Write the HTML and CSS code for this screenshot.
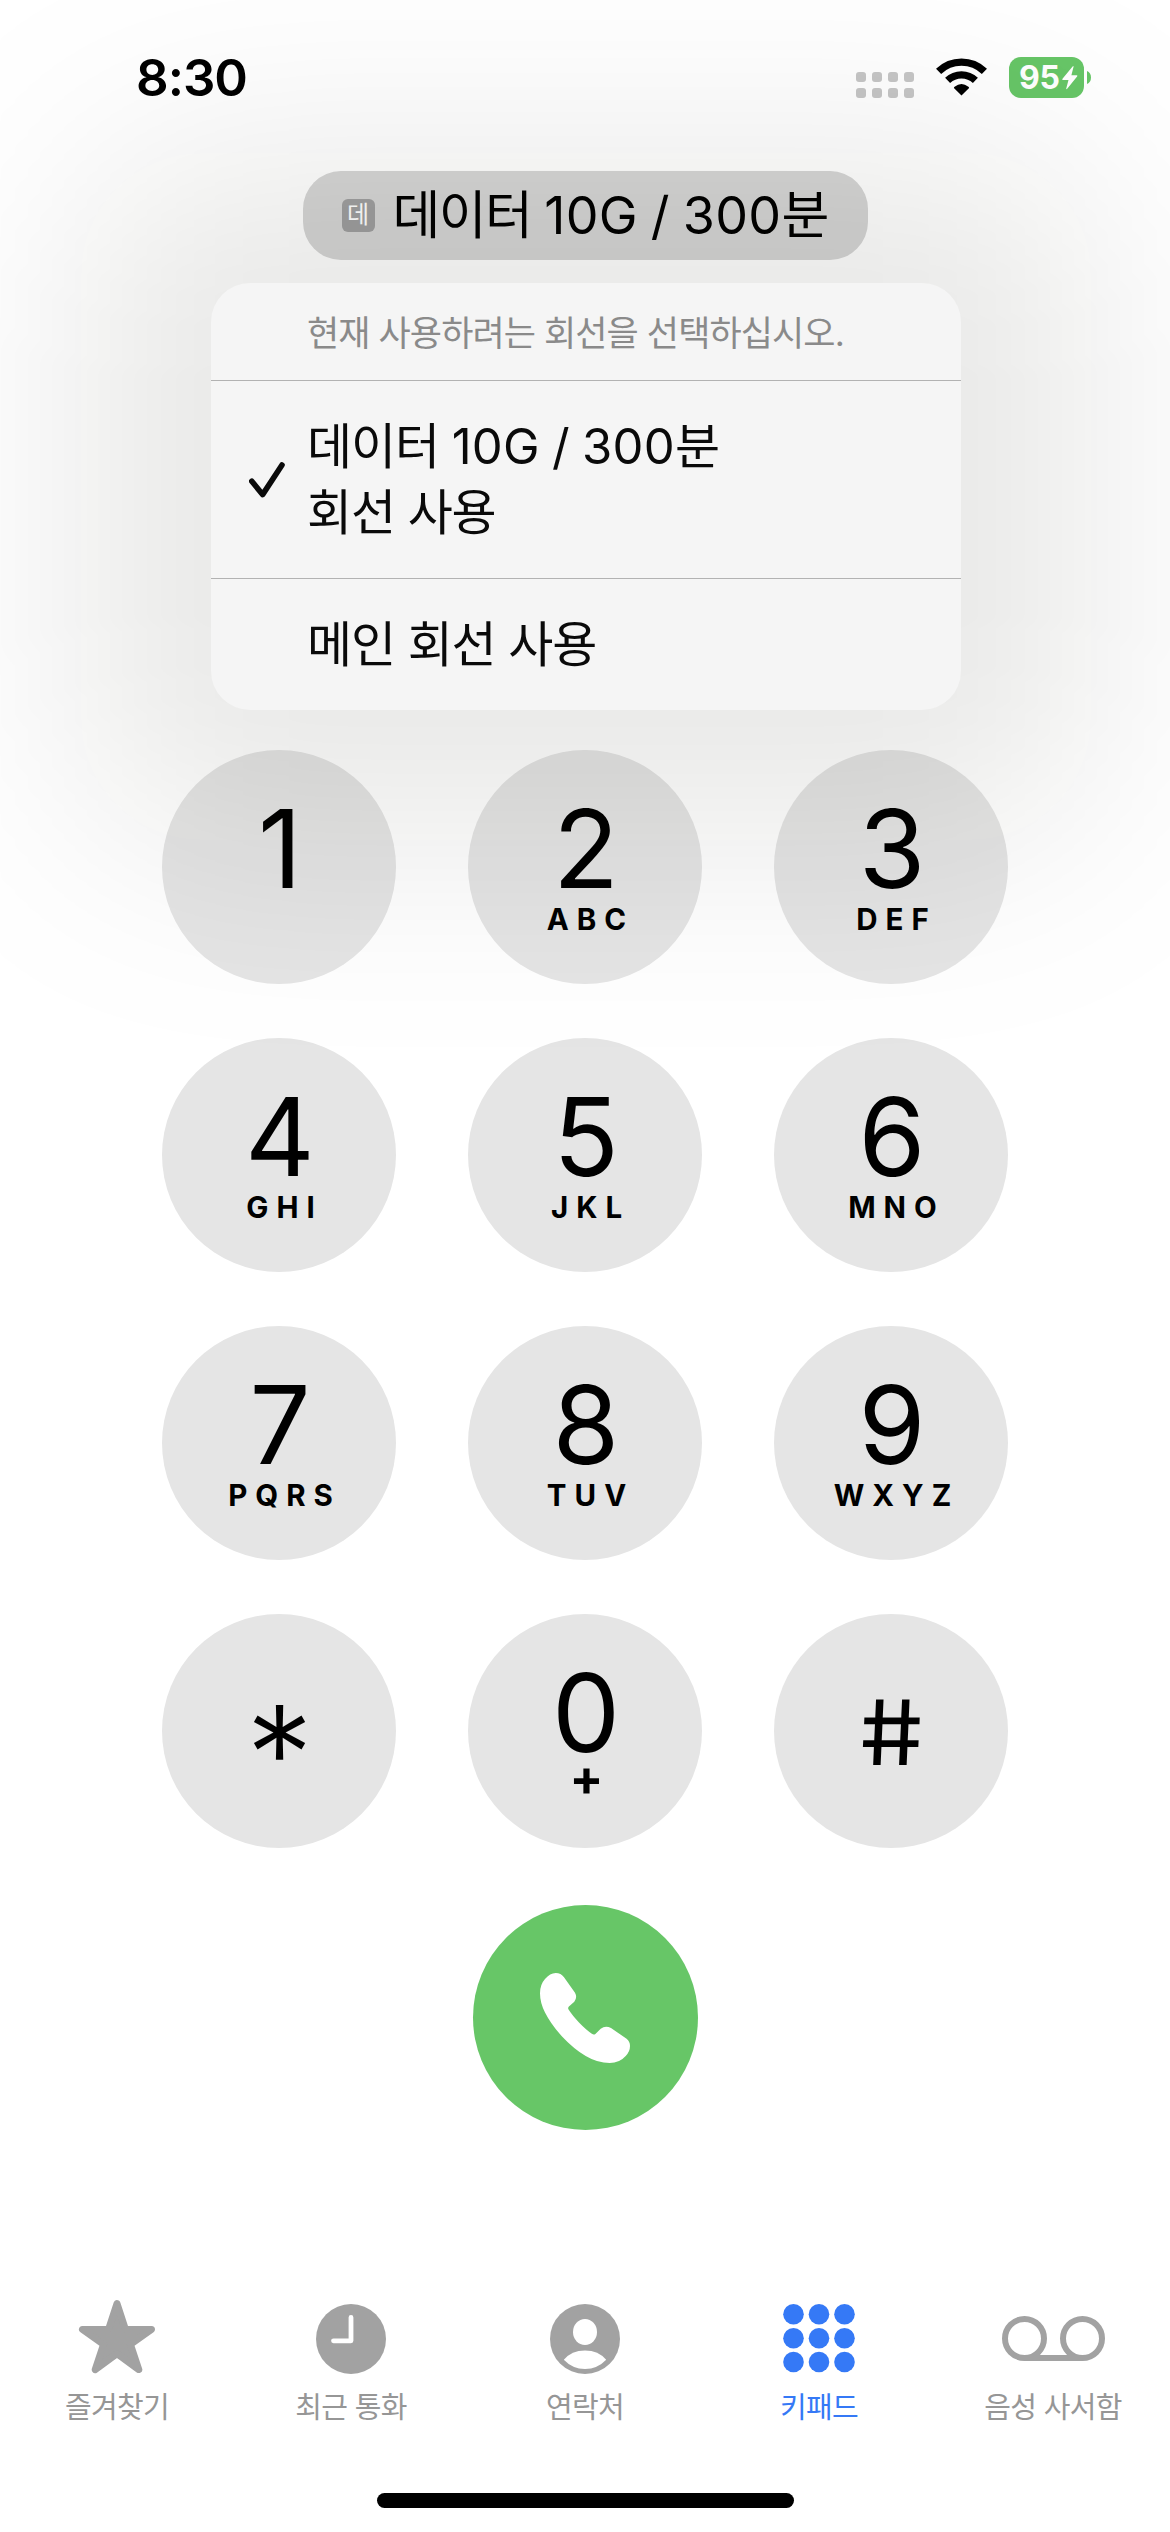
FILE: index.html
```html
<!DOCTYPE html>
<html lang="ko">
<head>
    <meta charset="UTF-8">
    <meta name="viewport" content="width=device-width, initial-scale=1.0">
    <title>키패드</title>
    <link rel="stylesheet" href="styles.css">
</head>
<body>
    <div class="screen">
        <header class="status-bar">
            <span class="time">8:30</span>
            <div class="status-icons">
                <svg class="signal" width="58" height="26" viewBox="0 0 58 26" fill="#c6c6c6">
                    <rect x="0" y="0" width="10" height="10" rx="3"/>
                    <rect x="16" y="0" width="10" height="10" rx="3"/>
                    <rect x="32" y="0" width="10" height="10" rx="3"/>
                    <rect x="48" y="0" width="10" height="10" rx="3"/>
                    <rect x="0" y="16" width="10" height="10" rx="3"/>
                    <rect x="16" y="16" width="10" height="10" rx="3"/>
                    <rect x="32" y="16" width="10" height="10" rx="3"/>
                    <rect x="48" y="16" width="10" height="10" rx="3"/>
                </svg>
                <svg class="wifi" width="51" height="38" viewBox="0 0 51 38">
                    <path d="M2.6 13.4A33 33 0 0 1 48.4 13.4" fill="none" stroke="#000" stroke-width="7.4"/>
                    <path d="M11.6 22.4A20 20 0 0 1 39.4 22.4" fill="none" stroke="#000" stroke-width="7.2"/>
                    <path d="M25.5 37.4L17.9 29.9Q17.9 29.2 18.6 28.7Q25.5 23.1 32.4 28.7Q33.1 29.2 33.1 29.9Z"/>
                </svg>
                <div class="battery">
                    <span class="battery-body">
                        <span>95</span>
                        <svg class="bolt" width="16" height="24" viewBox="0 0 16 24" fill="#fff"><path d="M10.6 0.4Q11.8 -0.4 11.5 1L9.4 9.2H14.6Q15.9 9.4 15.1 10.6L5.2 22.8Q3.9 24 4.3 22.3L6.5 14H1Q-0.2 13.8 0.7 12.5Z"/></svg>
                    </span>
                    <svg class="battery-tip" width="4" height="13" viewBox="0 0 4 13" fill="#67c667"><path d="M0 0Q4 1.8 4 6.5Q4 11.2 0 13Z"/></svg>
                </div>
            </div>
        </header>

        <div class="line-row">
            <button class="line-button"><span class="line-badge">데</span><span class="line-name">데이터 <span class="latin">10G / 300</span>분</span></button>
        </div>

        <div class="menu-shadow"></div>
        <div class="line-menu">
            <p class="menu-title">현재 사용하려는 회선을 선택하십시오.</p>
            <div class="menu-item menu-item-tall">
                <svg class="check" width="36" height="36" viewBox="0 0 36 36"><path d="M2.8 19.2L13.6 32.6L33 3" fill="none" stroke="#0a0a0a" stroke-width="5.6" stroke-linecap="round" stroke-linejoin="round"/></svg>
                <span>데이터 <span class="latin">10G / 300</span>분<br>회선 사용</span>
            </div>
            <div class="menu-item"><span>메인 회선 사용</span></div>
        </div>

        <main class="keypad">
            <button class="key"><span class="digit">1</span></button>
            <button class="key"><span class="digit">2</span><span class="letters">ABC</span></button>
            <button class="key"><span class="digit">3</span><span class="letters">DEF</span></button>
            <button class="key"><span class="digit">4</span><span class="letters">GHI</span></button>
            <button class="key"><span class="digit">5</span><span class="letters">JKL</span></button>
            <button class="key"><span class="digit">6</span><span class="letters">MNO</span></button>
            <button class="key"><span class="digit">7</span><span class="letters">PQRS</span></button>
            <button class="key"><span class="digit">8</span><span class="letters">TUV</span></button>
            <button class="key"><span class="digit">9</span><span class="letters">WXYZ</span></button>
            <button class="key"><span class="star">*</span></button>
            <button class="key"><span class="digit">0</span><span class="plus">+</span></button>
            <button class="key"><span class="hash">#</span></button>
        </main>

        <button class="call">
            <svg width="90" height="90" viewBox="0 0 90 90" fill="#fff"><path d="M15.7 0Q21 0 24 4.3L35 19.7Q37.6 24.5 34.3 28.7L28.9 33.6Q27.6 34.8 28.6 36.6Q32 42.2 39 49.5Q46 56.8 51.9 60.8Q53.8 62.3 55.4 60.9L60.7 55.7Q65.5 52 71 55L86.6 65.8Q90 68.5 90 73Q90 78.5 85.7 83Q79.5 90 69.7 90Q57.5 90 45.7 83Q33.6 75.8 22.3 63.7Q11.4 52 5 39.5Q0 29.8 0 20.3Q0 11.5 5 6Q10 0 15.7 0Z"/></svg>
        </button>

        <nav class="tab-bar">
            <div class="tab">
                <svg width="78" height="76" viewBox="0 0 78 76" fill="#a2a2a2" stroke="#a2a2a2" stroke-width="7" stroke-linejoin="round"><path d="M39 4.5L47.4 30.4H73.5L52.4 45.4L60.8 70.6L39 54.6L17.2 70.6L25.6 45.4L4.5 30.4H30.6Z"/></svg>
                <span>즐겨찾기</span>
            </div>
            <div class="tab">
                <svg width="70" height="76" viewBox="0 0 70 76"><circle cx="35" cy="40" r="35" fill="#a2a2a2"/><path d="M35 18.5V41.8H17.5" fill="none" stroke="#fff" stroke-width="4.8" stroke-linecap="round" stroke-linejoin="round"/></svg>
                <span>최근 통화</span>
            </div>
            <div class="tab">
                <svg width="70" height="76" viewBox="0 0 70 76"><circle cx="35" cy="40" r="35" fill="#a2a2a2"/><ellipse cx="35" cy="33" rx="12" ry="13" fill="#fff"/><path d="M13.8 60.8Q21.5 51.5 35 51.5T56.2 60.8Q47.5 70 35 70T13.8 60.8Z" fill="#fff"/></svg>
                <span>연락처</span>
            </div>
            <div class="tab active">
                <svg width="72" height="76" viewBox="0 0 72 76" fill="#3579f6">
                    <circle cx="10.5" cy="15.3" r="10.3"/><circle cx="36" cy="15.3" r="10.3"/><circle cx="61.5" cy="15.3" r="10.3"/>
                    <circle cx="10.5" cy="39.2" r="10.3"/><circle cx="36" cy="39.2" r="10.3"/><circle cx="61.5" cy="39.2" r="10.3"/>
                    <circle cx="10.5" cy="63" r="10.3"/><circle cx="36" cy="63" r="10.3"/><circle cx="61.5" cy="63" r="10.3"/>
                </svg>
                <span>키패드</span>
            </div>
            <div class="tab">
                <svg width="103" height="76" viewBox="0 0 103 76" fill="none" stroke="#a2a2a2" stroke-width="6"><circle cx="22.5" cy="39.5" r="19.5"/><circle cx="80.5" cy="39.5" r="19.5"/><path d="M22.5 59H80.5"/></svg>
                <span>음성 사서함</span>
            </div>
        </nav>

        <div class="home-indicator"></div>
    </div>
</body>
</html>
```

FILE: styles.css
```css
* {
    box-sizing: border-box;
}
body {
    margin: 0;
    background: #fff;
    font-family: Inter, "Noto Sans CJK KR", sans-serif;
    color: #000;
}
button {
    border: none;
    padding: 0;
    margin: 0;
    color: inherit;
    font-family: inherit;
}
svg {
    display: block;
    flex-shrink: 0;
}
.screen {
    position: relative;
    width: 1170px;
    height: 2532px;
    overflow: hidden;
    display: flex;
    flex-direction: column;
    align-items: center;
}

/* Status bar */
.status-bar {
    width: 100%;
    height: 171px;
    padding: 48px 79px 0 136px;
    display: flex;
    justify-content: space-between;
    align-items: flex-start;
}
.time {
    font-size: 51px;
    line-height: 60px;
    font-weight: 600;
    letter-spacing: -1px;
}
.status-icons {
    display: flex;
    align-items: flex-start;
    padding-top: 9px;
}
.signal {
    margin-top: 15px;
}
.wifi {
    margin: 1px 22px 0;
}
.battery {
    display: flex;
    align-items: center;
    gap: 3px;
}
.battery-body {
    width: 75px;
    height: 41px;
    padding-left: 10px;
    border-radius: 12px;
    background: #67c667;
    color: #fff;
    font-size: 32px;
    font-weight: 700;
    letter-spacing: -0.3px;
    display: flex;
    align-items: center;
    gap: 2px;
}

/* Line selector */
.line-row {
    height: 89px;
}
.line-button {
    width: 565px;
    height: 89px;
    border-radius: 38px;
    background: #d6d6d6;
    display: flex;
    align-items: center;
    padding-left: 39px;
}
.line-badge {
    width: 33px;
    height: 33px;
    border-radius: 6px;
    background: #9f9fa0;
    color: #fff;
    font-size: 24px;
    line-height: 31px;
    text-align: center;
}
.line-name {
    margin-left: 18px;
    font-size: 52px;
    line-height: 80px;
    letter-spacing: -1.6px;
    white-space: nowrap;
}
.latin {
    letter-spacing: 0.3px;
    word-spacing: -2px;
}
.menu-shadow {
    position: absolute;
    left: 81px;
    top: 153px;
    width: 1010px;
    height: 687px;
    border-radius: 120px;
    background: rgba(12, 12, 0, 0.095);
    filter: blur(110px);
}
.line-menu {
    position: absolute;
    z-index: 1;
    left: 211px;
    top: 283px;
    width: 750px;
    height: 427px;
    border-radius: 39px;
    background: #f5f5f5;
}
.menu-title {
    margin: 0;
    height: 97px;
    padding-left: 96px;
    font-size: 35px;
    line-height: 101px;
    letter-spacing: -0.9px;
    color: #8a8a8a;
}
.menu-item {
    height: 132px;
    padding-left: 96px;
    border-top: 1px solid #b2b2b2;
    display: flex;
    align-items: center;
    font-size: 49px;
    line-height: 66px;
    letter-spacing: -1.1px;
    color: #0a0a0a;
}
.menu-item-tall {
    height: 198px;
    padding-left: 38px;
    gap: 22px;
}

/* Keypad */
.keypad {
    margin-top: 489.5px;
    display: grid;
    grid-template-columns: repeat(3, 234px);
    grid-auto-rows: 234px;
    gap: 54px 72px;
}
.key {
    border-radius: 50%;
    background: #e5e5e5;
    display: flex;
    flex-direction: column;
    align-items: center;
}
.digit {
    margin-top: 49px;
    padding-left: 2px;
    font-size: 108px;
    line-height: 100px;
}
.letters {
    margin-top: 0;
    padding-left: 11px;
    font-size: 29.5px;
    line-height: 40px;
    font-weight: 700;
    letter-spacing: 8px;
}
.plus {
    margin-top: -7px;
    padding-left: 3px;
    font-size: 50px;
    line-height: 44px;
    font-weight: 700;
}
.star {
    margin-top: 89px;
    padding-left: 1px;
    font-size: 134px;
    line-height: 100px;
    font-weight: 350;
}
.hash {
    margin-top: 69px;
    font-size: 90px;
    line-height: 100px;
    transform: skewX(8deg) scaleX(1.13);
}
.call {
    width: 225px;
    height: 225px;
    margin-top: 57.5px;
    border-radius: 50%;
    background: #67c667;
    display: flex;
    justify-content: center;
    align-items: center;
}

/* Tab bar */
.tab-bar {
    width: 100%;
    margin-top: 169px;
    display: grid;
    grid-template-columns: repeat(5, 1fr);
}
.tab {
    display: flex;
    flex-direction: column;
    align-items: center;
    gap: 13px;
    font-size: 29px;
    line-height: 40px;
    letter-spacing: -0.7px;
    color: #969696;
}
.active {
    color: #3579f6;
}
.home-indicator {
    width: 417px;
    height: 15px;
    margin-top: 65px;
    border-radius: 8px;
    background: #000;
}
```
